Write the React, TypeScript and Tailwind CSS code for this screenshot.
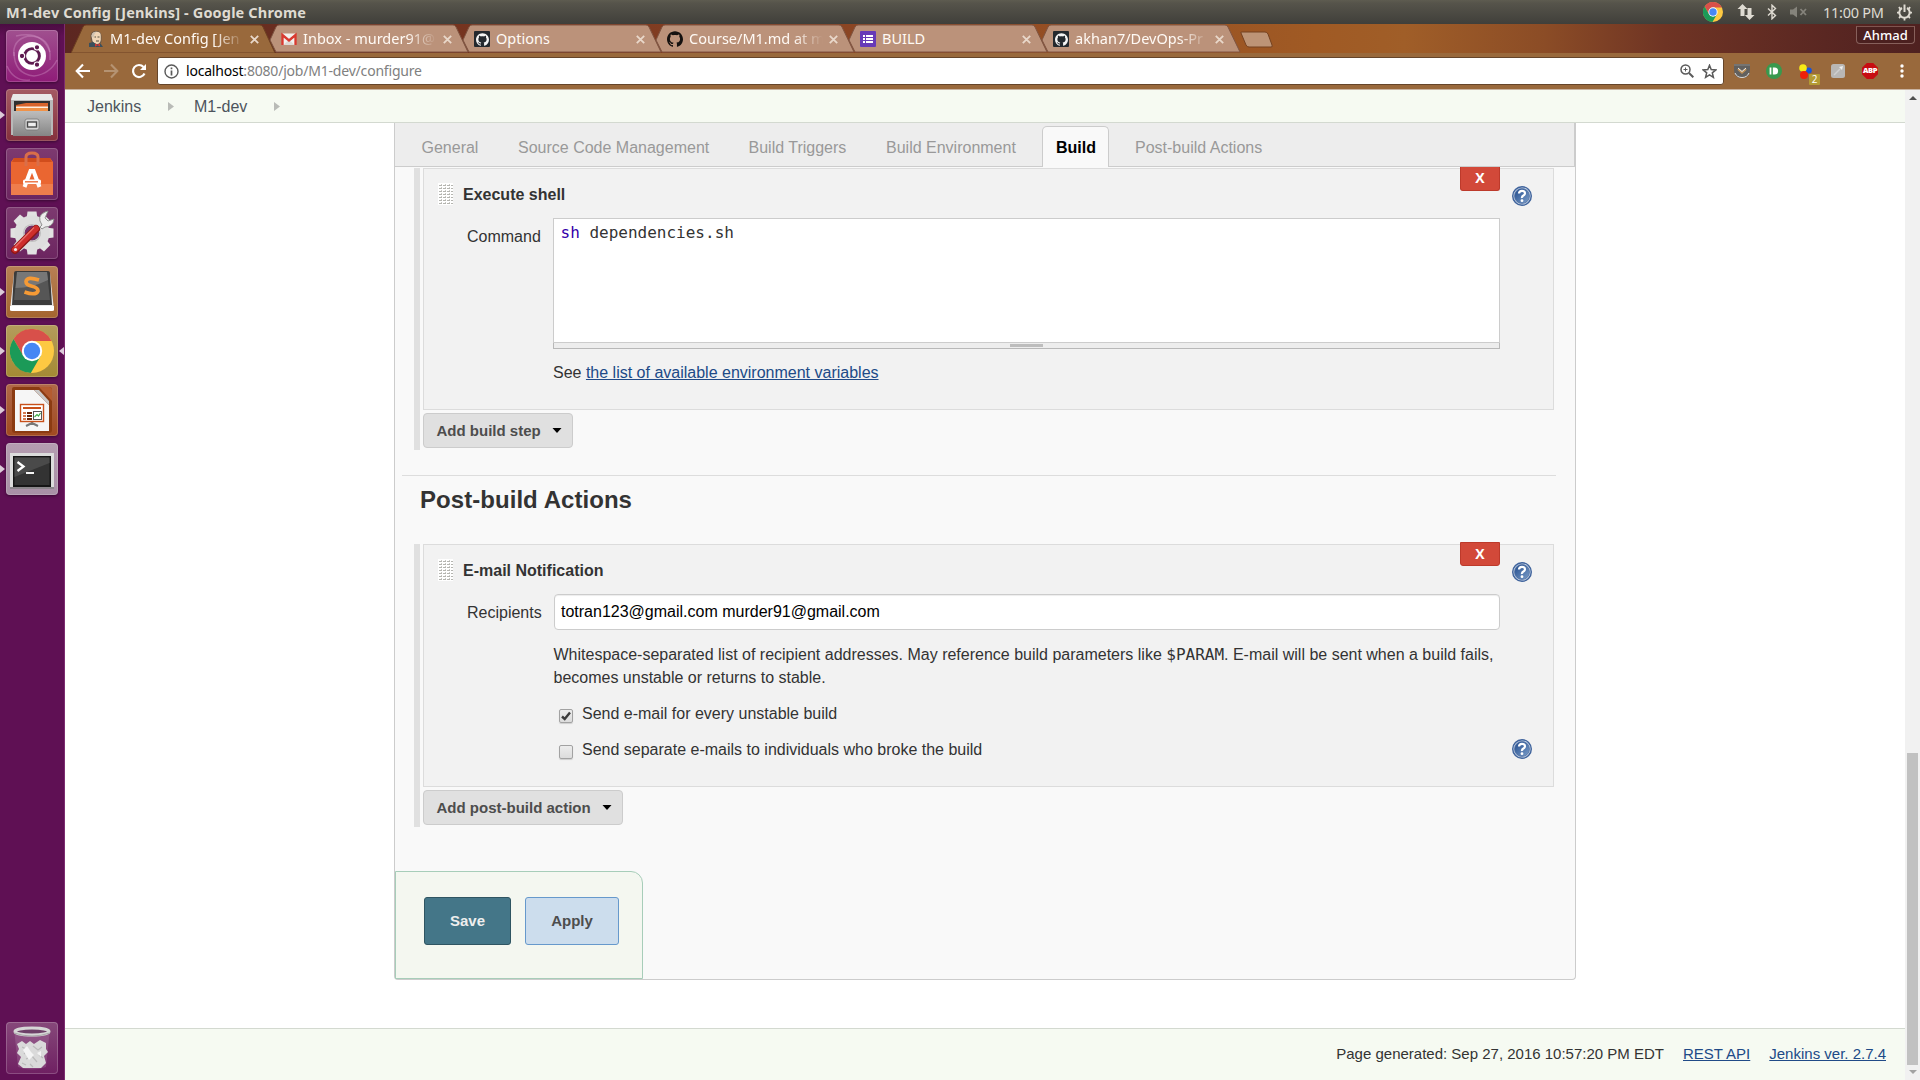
import type { ReactNode } from "react";
import { SiGithub } from "react-icons/si";

const tiles = [
  "bg-[linear-gradient(#a0508f,#8f1c78)]",
  "bg-[linear-gradient(#a45a63,#84303c)]",
  "bg-[linear-gradient(#7d3a70,#6c2560)]",
  "bg-[linear-gradient(#7d3a70,#6c2560)]",
  "bg-[linear-gradient(#b78055,#a4652f)]",
  "bg-[linear-gradient(#b49c5c,#a48a34)]",
  "bg-[linear-gradient(#b06848,#a04a20)]",
  "bg-[linear-gradient(#b59db1,#a890a6)]",
];

function ChromeBall({ size }: { size: number }) {
  return (
    <svg width={size} height={size} viewBox="0 0 44 44" className="block">
      <circle cx="22" cy="22" r="22" fill="#fdc942" />
      <path d="M3.540 10A22 22 0 0 1 41.600 12H22L13.340 27Z" fill="#d8504a" />
      <path d="M3.540 10L13.340 27H30.660L20.860 44A22 22 0 0 1 3.540 10Z" fill="#1b9a58" />
      <circle cx="22" cy="22" r="10.2" fill="#fff" />
      <circle cx="22" cy="22" r="8.200" fill="#4687f4" />
    </svg>
  );
}

function UbuntuIcon() {
  return (
    <svg width="52" height="52" viewBox="0 0 52 52">
      <g fill="none" stroke="#d9a0cf" strokeOpacity=".35" strokeWidth="1.500">
        <path d="M8 26Q6 10 22 6Q46 6 44 30" />
        <path d="M8 22Q8 44 28 46Q44 44 51 30" />
        <path d="M10 6Q36 0 44 22" />
        <path d="M1 36Q8 52 24 50" />
      </g>
      <circle cx="26" cy="26" r="14" fill="#fff" />
      <circle cx="26" cy="26" r="7.4" fill="none" stroke="#5e1a50" strokeWidth="2.9" />
      <g fill="#5e1a50" stroke="#fff" strokeWidth="1.1">
        <circle cx="16" cy="26" r="2.7" />
        <circle cx="31" cy="17.3" r="2.7" />
        <circle cx="31" cy="34.7" r="2.7" />
      </g>
    </svg>
  );
}

function FilesIcon() {
  return (
    <svg width="52" height="52" viewBox="0 0 52 52">
      <defs>
        <linearGradient id="cab" x1="0" y1="0" x2="0" y2="1">
          <stop offset="0" stopColor="#bdbdbd" />
          <stop offset="1" stopColor="#858585" />
        </linearGradient>
      </defs>
      <path d="M7 5H45L47 10V46H5V10Z" fill="#b9b9b9" />
      <path d="M7 5H45L47 11H5Z" fill="#e9e9e9" />
      <path d="M8 12H44V24H8Z" fill="#303030" />
      <path d="M10 16L20 14H42V23H10Z" fill="#d8642c" />
      <path d="M10 17.500H42V19H10Z" fill="#ffeede" />
      <path d="M10 19H42V22H10Z" fill="#f09248" />
      <rect x="7" y="22" width="38" height="25" fill="url(#cab)" />
      <rect x="19" y="30" width="14" height="11" rx="2" fill="#d5d5d5" stroke="#777" strokeWidth=".8" />
      <rect x="21.5" y="33" width="9" height="5" fill="#eee" stroke="#484848" strokeWidth="1.4" />
    </svg>
  );
}

function SoftwareIcon() {
  return (
    <svg width="52" height="52" viewBox="0 0 52 52">
      <path d="M8 10H44L47 14V47H5V14Z" fill="#ea6631" />
      <path d="M8 10H44L46 14H6Z" fill="#d14d1c" />
      <path d="M5 36H47V47H5Z" fill="#ef7d4c" />
      <path d="M20 18V9Q20 5 26 5T32 9V18" fill="none" stroke="#d96e49" strokeWidth="3" />
      <path d="M18.5 39L24.5 23H27.5L33.5 39" fill="none" stroke="#fff" strokeWidth="4" />
      <rect x="17" y="31.5" width="18" height="4.5" rx="1.5" fill="#fff" />
      <path d="M19 33.8H32" stroke="#ea6631" strokeWidth="1.3" />
    </svg>
  );
}

function SettingsIcon() {
  const teeth = [0, 45, 90, 135, 180, 225, 270, 315];
  return (
    <svg width="52" height="52" viewBox="0 0 52 52">
      {teeth.map((a) => (
        <path key={a} d="M21.500 4.500H30.500L31.500 12H20.500Z" fill="#e2e2e2" transform={`rotate(${a} 26 26)`} />
      ))}
      <circle cx="26" cy="26" r="12.500" fill="none" stroke="#dedede" strokeWidth="10" />
      <circle cx="26" cy="26" r="8.500" fill="none" stroke="#bfbfbf" strokeWidth="1.2" />
      <path d="M34 20L36 18Q30 9 39 5L42 4L39 11L42 14L48 12Q47 20 39 20L36 22Z" fill="#ededed" stroke="#888" strokeWidth=".9" />
      <path d="M9 43L30 22" stroke="#8d1818" strokeWidth="8" strokeLinecap="round" />
      <path d="M9 42.5L30 21.5" stroke="#ce2e2c" strokeWidth="6" strokeLinecap="round" />
      <path d="M9 40L28 20.5" stroke="#e8706c" strokeWidth="1.2" />
      <circle cx="9.5" cy="42.5" r="1.6" fill="#eee" />
    </svg>
  );
}

function SublimeIcon() {
  return (
    <svg width="52" height="52" viewBox="0 0 52 52">
      <path d="M8 7H44L48 44H4Z" fill="#e9e9e9" />
      <path d="M4 40H48V44Q48 45 46 45H6Q4 45 4 44Z" fill="#fff" />
      <path d="M10 5H42Q44 5 44 7L46 39H6L8 7Q8 5 10 5Z" fill="#3b3b3b" />
      <path d="M11 6H41L44 34H8Z" fill="#565656" />
      <path d="M11 6H41L42 14Q26 22 9.5 22Z" fill="#777" />
      <path d="M33 14Q21 10 20 15.5Q20 19 26 20.2T32 25Q30 30 18.5 26" fill="none" stroke="#f59a35" strokeWidth="3.7" />
    </svg>
  );
}

function ImpressIcon() {
  return (
    <svg width="52" height="52" viewBox="0 0 52 52">
      <path d="M8 3H43Q46 3 46 6V46Q46 49 43 49H9Q6 49 6 46V5Q6 3 8 3Z" fill="#8b3b12" />
      <path d="M33 3H43Q46 3 46 6V17Z" fill="#b45b30" />
      <path d="M9 6H28L43 21V47H9Z" fill="#f6f6f6" />
      <path d="M28 6L43 21V17L33 6Z" fill="#c9c9c9" />
      <path d="M26 37V41M26 39L20 42M26 39L32 42" stroke="#777" strokeWidth="2" />
      <rect x="14.5" y="20.5" width="23" height="17" fill="#fff" stroke="#c8501a" strokeWidth="1.4" />
      <path d="M17 24H35" stroke="#c8501a" strokeWidth="2" />
      <path d="M17 29H20M17 32H20M17 35H20" stroke="#c8501a" strokeWidth="1.6" />
      <path d="M21 29H26M21 32H26M21 35H26" stroke="#6b2608" strokeWidth="1.8" />
      <rect x="27.5" y="27.5" width="8" height="8" fill="#fff" stroke="#555" />
      <path d="M28.5 33L31 30.5L32.5 32L34.5 29" stroke="#3fae49" strokeWidth="1.2" fill="none" />
    </svg>
  );
}

function TerminalIcon() {
  return (
    <svg width="52" height="52" viewBox="0 0 52 52">
      <path d="M4 11H48V46H4Z" fill="#8b868b" />
      <path d="M4 10H48V44H4Z" fill="#dcdcdc" />
      <rect x="7" y="13" width="38" height="31" fill="#161616" />
      <rect x="8.500" y="14.500" width="35" height="27.500" fill="#333" />
      <path d="M8.500 14.500H43.500V20L8.500 34Z" fill="#4a4a4a" />
      <path d="M11.500 19L17.500 23.500L11.500 28" fill="none" stroke="#fff" strokeWidth="2.3" />
      <path d="M20 30H28" stroke="#fff" strokeWidth="1.9" />
    </svg>
  );
}

function TrashIcon() {
  return (
    <svg width="52" height="52" viewBox="0 0 52 52">
      <path d="M8.500 11H43.500L40 45Q26 50 12 45Z" fill="#c9a5c4" fillOpacity=".22" />
      <path d="M11 22L16 19L20 22L24 19L28 22L34 18L40 21V27L42 30L38 34L40 41L35 46H17L12 42L15 35L11 31L13 27Z" fill="#dadada" />
      <path d="M16 25L22 28L18 32M27 24L32 28L36 25M20 37L26 34L31 40M33 33L37 36M16 41L20 43M24 42L27 45" stroke="#bbb" strokeWidth="1.200" fill="none" />
      <path d="M17 28L21 24L25 30L28 33L23 38ZM31 31L35 29V35Z" fill="#f4f4f4" />
      <ellipse cx="26" cy="9.500" rx="17" ry="3.500" fill="#6e4068" stroke="#d6d6d6" strokeWidth="3" />
      <path d="M8 11Q26 17 44 11" fill="none" stroke="#a9a9a9" strokeWidth="1" />
    </svg>
  );
}

const launcherIcons: ReactNode[] = [
  <UbuntuIcon />,
  <FilesIcon />,
  <SoftwareIcon />,
  <SettingsIcon />,
  <SublimeIcon />,
  <ChromeBall size={44} />,
  <ImpressIcon />,
  <TerminalIcon />,
];
const running = [false, true, false, false, true, true, true, true];

function Launcher() {
  return (
    <aside className="flex w-[65px] shrink-0 flex-col border-r border-[#7d2c70] bg-[linear-gradient(#4b0c42,#5f1054_12px,#5f1054)] pt-1.5">
      <div className="flex flex-col gap-[7px]">
        {launcherIcons.map((icon, i) => (
          <div key={i} className="flex h-[52px] items-center">
            <div className="w-1.5">
              {running[i] && (
                <svg width="5" height="8" viewBox="0 0 5 8">
                  <path d="M0 0L5 4L0 8Z" fill="#dccbd9" />
                </svg>
              )}
            </div>
            <div
              className={`flex size-[52px] items-center justify-center rounded-[4px] shadow-[inset_0_0_0_1px_rgba(255,255,255,0.18),0_1px_3px_rgba(0,0,0,0.4)] ${tiles[i]}`}
            >
              {icon}
            </div>
            {i === 5 && (
              <svg width="5" height="8" viewBox="0 0 5 8" className="ml-px">
                <path d="M5 0L0 4L5 8Z" fill="#dccbd9" />
              </svg>
            )}
          </div>
        ))}
      </div>
      <div className="mt-auto mb-1.5 ml-1.5 size-[52px] rounded-[4px] bg-[linear-gradient(#86487a,#6f2062)] shadow-[inset_0_0_0_1px_rgba(255,255,255,0.2)]">
        <TrashIcon />
      </div>
    </aside>
  );
}

function SystemBar() {
  return (
    <header className="flex h-6 items-center bg-[linear-gradient(#5e5c50,#56544b_3px,#403f3a)] pl-1.5 font-['Noto_Sans',sans-serif] text-[#dfdbd2]">
      <span className="text-[14.5px] leading-6 font-bold tracking-[0.15px] whitespace-nowrap">M1-dev Config [Jenkins] - Google Chrome</span>
      <div className="ml-auto flex h-6 items-center">
        <ChromeBall size={20} />
        <svg width="18" height="18" viewBox="0 0 18 18" className="ml-[14px]" fill="#dfdbd2">
          <path d="M5.500 1L10.500 6H7.500V13H3.500V6H.5Z" />
          <path d="M12.500 17L7.800 12H10.500V5H14.500V12H17.500Z" />
        </svg>
        <svg width="10" height="16" viewBox="0 0 10 16" className="ml-[12px]" fill="none" stroke="#dfdbd2" strokeWidth="1.400">
          <path d="M1 4.500L8.500 11.500L5 14.800V1.200L8.500 4.500L1 11.500" />
        </svg>
        <svg width="18" height="12" viewBox="0 0 18 12" className="ml-[13px]" fill="#85837b">
          <path d="M0 3.500H3L7 .5V11.500L3 8.500H0Z" />
          <path d="M10.500 3L16 9M16 3L10.500 9" stroke="#85837b" strokeWidth="1.800" />
        </svg>
        <span className="ml-[15px] w-[61px] text-[14.5px] leading-6 tracking-[-0.25px] whitespace-nowrap">11:00 PM</span>
        <svg width="17" height="17" viewBox="0 0 17 17" className="mr-[7px] ml-3" fill="none" stroke="#dfdbd2">
          <path d="M6 4A5.200 5.200 0 1 0 11 4" strokeWidth="2" />
          <path d="M8.500 .5V8" strokeWidth="2" />
          <path d="M1 8.700H3.500M13.500 8.700H16M3 14L4.800 12.200M14 14L12.200 12.200M8.500 14V16.500M2.800 3.200L4.500 4.900M14.200 3.200L12.500 4.900" strokeWidth="1.800" />
        </svg>
      </div>
    </header>
  );
}

function JenkinsFavicon() {
  return (
    <svg width="16" height="16" viewBox="0 0 16 16">
      <path d="M2.500 5Q3 0 8 0T13.500 5V11L11 14H5L3 10Z" fill="#6b5a4b" />
      <path d="M3.500 5Q4 .8 8.500 .8T12.800 5V9Q12 13 9 13T4.500 10Z" fill="#f0d6b7" />
      <path d="M3.500 5Q4.500 .6 8.500 .8Q6 2.500 5.500 7Z" fill="#cfc3b2" />
      <path d="M6.500 6H8M9.500 6H11.500M8 10H11" stroke="#443" strokeWidth=".9" />
      <path d="M1 12L5 11L9 13.500L12.500 12.500L15 16H1Z" fill="#3a4f5c" />
      <path d="M7 12.500L9.500 13.800L12 12.500V15.500L9.500 14.200L7 15.800Z" fill="#d33833" />
    </svg>
  );
}
function GmailFavicon() {
  return (
    <svg width="16" height="16" viewBox="0 0 16 16">
      <rect x="1" y="2.500" width="14" height="11.500" rx="1" fill="#f3f1ee" />
      <path d="M2.500 14L8 8.500L13.500 14Z" fill="#ded9d4" />
      <path d="M1.500 14V4L8 9.500L14.500 4V14" fill="none" stroke="#d93a30" strokeWidth="2.300" />
    </svg>
  );
}
function GithubDark() {
  return (
    <div className="flex size-4 items-center justify-center rounded-[1px] bg-[#24292e]">
      <SiGithub size={13} color="#f4f4f4" />
    </div>
  );
}
function FormsFavicon() {
  return (
    <svg width="16" height="16" viewBox="0 0 16 16">
      <rect width="16" height="16" rx="1" fill="#673ab7" />
      <path d="M3 5H5M3 8H5M3 11H5M6 5H13M6 8H13M6 11H13" stroke="#fff" strokeWidth="2" />
    </svg>
  );
}

const browserTabs: { title: string; icon: ReactNode; fade?: boolean }[] = [
  { title: "M1-dev Config [Jen", icon: <JenkinsFavicon />, fade: true },
  { title: "Inbox - murder91@", icon: <GmailFavicon />, fade: true },
  { title: "Options", icon: <GithubDark /> },
  { title: "Course/M1.md at m", icon: <SiGithub size={16} color="#15110f" />, fade: true },
  { title: "BUILD", icon: <FormsFavicon /> },
  { title: "akhan7/DevOps-Pr", icon: <GithubDark />, fade: true },
];

function TabStrip() {
  return (
    <div className="flex h-[29px] bg-[linear-gradient(90deg,#5c2721_0,#74331f_380px,#8a4423_760px,#a05a24_1250px,#a05e28_1340px,#8b4c26_1480px,#6f3424_1600px,#5a2722_1760px,#4f2120_1855px)] pl-[6px]">
      {browserTabs.map((tab, i) => (
        <div key={tab.title} className={`relative h-[29px] w-[193px] shrink-0 ${i === 0 ? "z-10" : ""}`}>
          <svg width="208" height="29" viewBox="0 0 208 29" className="absolute top-0 left-0">
            {i === 0 ? (
              <path d="M0 29L12 3Q13 1 15 1H189Q191 1 192 3L204 29Z" fill="#99693c" stroke="#6d4022" strokeWidth="1" />
            ) : (
              <path d="M6 16L12 3Q13 1 15 1H189Q191 1 192 3L204 28H12Z" fill="#bb927a" stroke="#7f5542" strokeWidth="1" />
            )}
          </svg>
          <div className="relative flex h-full items-center pt-px pl-[17px]">
            <div className="flex size-4 items-center justify-center">{tab.icon}</div>
            <div
              className={`ml-1.5 w-[134px] pb-[2px] font-['Noto_Sans',sans-serif] text-[14.5px] leading-[26px] whitespace-nowrap text-[#fffaf5] ${
                tab.fade ? "[mask-image:linear-gradient(90deg,#000_104px,transparent_134px)]" : ""
              }`}
            >
              {tab.title}
            </div>
            <svg width="9" height="9" viewBox="0 0 9 9" className="ml-[6px]" stroke="#e9d8ca" strokeWidth="1.800">
              <path d="M.8 .8L8.200 8.200M8.200 .8L.8 8.200" />
            </svg>
          </div>
        </div>
      ))}
      <svg width="34" height="17" viewBox="0 0 34 17" className="mt-[7px] ml-[11px]">
        <path d="M1 2Q0 1 2 1H25Q27 1 28 3L32 14Q33 16 31 16H9Q7 16 6 14Z" fill="#bd9476" stroke="#754221" />
      </svg>
      <div className="mt-[2px] mr-[5px] ml-auto h-[18px] w-[59px] rounded-b-[4px] border border-t-[#7f5550] border-[#87605b] bg-[#4b201f] text-center font-['Noto_Sans',sans-serif] text-[13px] leading-[17px] font-medium text-white">
        Ahmad
      </div>
    </div>
  );
}

function Toolbar() {
  return (
    <div className="flex h-[37px] items-center border-b border-[#c9b4a2] bg-[#99693c]">
      <svg width="16" height="16" viewBox="0 0 16 16" className="ml-[10px]" fill="none" stroke="#fff" strokeWidth="2.100">
        <path d="M15 8H2M8 1.500L1.700 8L8 14.500" />
      </svg>
      <svg width="16" height="16" viewBox="0 0 16 16" className="ml-[12px]" fill="none" stroke="#b59372" strokeWidth="2.100">
        <path d="M1 8H14M8 1.500L14.300 8L8 14.500" />
      </svg>
      <svg width="16" height="16" viewBox="0 0 16 16" className="ml-[12px]" fill="none" stroke="#fff" strokeWidth="2.200">
        <path d="M13.500 10.500A6 6 0 1 1 12.500 4" />
        <path d="M15 1V7H9Z" fill="#fff" stroke="none" />
      </svg>
      <div className="ml-[10px] flex h-7 w-[1567px] items-center rounded-[3px] border border-[#65452a] bg-white font-['Noto_Sans',sans-serif] text-[14px]">
        <svg width="15" height="15" viewBox="0 0 15 15" className="ml-[6px]" fill="none" stroke="#5a5a5a" strokeWidth="1.400">
          <circle cx="7.500" cy="7.500" r="6.500" />
          <path d="M7.500 6.500V11.500M7.500 3.500V5.200" strokeWidth="1.700" />
        </svg>
        <div className="ml-[7px] leading-[26px] tracking-[-0.2px] whitespace-nowrap text-[#808080]">
          <span className="text-black">localhost</span>:8080/job/M1-dev/configure
        </div>
        <svg width="14" height="14" viewBox="0 0 14 14" className="mr-[8px] ml-auto" fill="none" stroke="#5a5a5a" strokeWidth="1.500">
          <circle cx="5.500" cy="5.500" r="4.500" />
          <path d="M9 9L13.300 13.300" strokeWidth="2" />
          <path d="M3.500 5.500H7.500M5.500 3.500V7.500" strokeWidth="1" />
        </svg>
        <svg width="15" height="15" viewBox="0 0 15 15" className="mr-[6px]" fill="none" stroke="#5a5a5a" strokeWidth="1.500">
          <path d="M7.500 1.300L9.200 5.600L13.800 5.900L10.300 8.800L11.400 13.300L7.500 10.800L3.600 13.300L4.700 8.800L1.200 5.900L5.800 5.600Z" />
        </svg>
      </div>
      <svg width="16" height="16" viewBox="0 0 16 16" className="ml-[10px]">
        <path d="M0 1H16V7Q16 15 8 15T0 7Z" fill="#62605e" />
        <path d="M0 2H16" stroke="#8a8886" />
        <path d="M1 10Q3 14.500 8 14.500T15 10" stroke="#ddd" fill="none" />
        <path d="M4 6L8 9.500L12 6" stroke="#c09055" strokeWidth="2.300" fill="none" />
        <path d="M4 5L8 8.500L12 5" stroke="#eee" strokeWidth="1" fill="none" />
      </svg>
      <svg width="16" height="16" viewBox="0 0 16 16" className="ml-[16px]">
        <circle cx="8" cy="8" r="8" fill="#38994e" />
        <path d="M4.500 4.500V11.500" stroke="#fff" strokeWidth="1.800" />
        <path d="M6.800 4.500H8.600A3.500 3.500 0 0 1 8.600 11.500H6.800Z" fill="#fff" />
      </svg>
      <div className="relative ml-[17px] size-4">
        <svg width="16" height="16" viewBox="0 0 16 16">
          <circle cx="9.800" cy="7.500" r="3" fill="#1554dc" />
          <circle cx="4" cy="5" r="3.800" fill="#f6ea16" />
          <circle cx="5" cy="12" r="4" fill="#ef2009" />
        </svg>
        <div className="absolute top-[11px] left-[10px] h-[11px] w-[11px] rounded-[1px] bg-[#b49a33] text-center font-['Open_Sans',sans-serif] text-[10px] leading-[11px] text-white">2</div>
      </div>
      <svg width="14" height="14" viewBox="0 0 14 14" className="ml-[16px]">
        <rect width="14" height="14" rx="2.500" fill="#b9b7b5" />
        <path d="M3 11L9 5" stroke="#cfcfcf" strokeWidth="1.500" />
        <path d="M8 3L12 2L11 6Z" fill="#efefef" />
      </svg>
      <div className="ml-[17px] flex size-4 items-center justify-center bg-[#c70d12] font-['Open_Sans',sans-serif] text-[7.5px] leading-none font-extrabold tracking-[-0.4px] text-white [clip-path:polygon(30%_0,70%_0,100%_30%,100%_70%,70%_100%,30%_100%,0_70%,0_30%)]">
        ABP
      </div>
      <svg width="4" height="14" viewBox="0 0 4 14" className="ml-[22px]" fill="#fff">
        <circle cx="2" cy="2" r="1.700" />
        <circle cx="2" cy="7" r="1.700" />
        <circle cx="2" cy="12" r="1.700" />
      </svg>
    </div>
  );
}

function Crumb() {
  return (
    <svg width="6" height="9" viewBox="0 0 6 9">
      <path d="M0 0L6 4.500L0 9Z" fill="#b9bbb7" />
    </svg>
  );
}

function Help() {
  return (
    <svg width="20" height="20" viewBox="0 0 20 20" className="block">
      <defs>
        <linearGradient id="help" x1="0" y1="0" x2="1" y2="1">
          <stop offset="0" stopColor="#204a8c" />
          <stop offset="1" stopColor="#7d9fca" />
        </linearGradient>
      </defs>
      <circle cx="10" cy="10" r="9.300" fill="#c3d2e6" stroke="#3f639c" strokeWidth="1.400" />
      <circle cx="10" cy="10" r="7.500" fill="url(#help)" stroke="#53709f" strokeWidth=".7" />
      <path d="M7 7.500Q7 4.800 10 4.800T13 7.300Q13 8.800 11.400 9.600T10 12" fill="none" stroke="#fff" strokeWidth="2.200" />
      <circle cx="10" cy="14.700" r="1.400" fill="#fff" />
    </svg>
  );
}

function Grip() {
  return (
    <svg width="15" height="22" viewBox="0 0 15 22" className="block">
      <defs>
        <pattern id="grip" x="1" y="1" width="4" height="3" patternUnits="userSpaceOnUse">
          <rect width="4" height="3" fill="#fff" />
          <rect y="1" width="3" height="1" fill="#b5b5b0" />
          <rect x="2" width="1" height="1" fill="#c9c9c5" />
        </pattern>
      </defs>
      <rect width="15" height="22" fill="url(#grip)" />
    </svg>
  );
}

function AddButton({ label, width }: { label: string; width: string }) {
  return (
    <div className={`mt-[3px] flex h-[35px] items-center rounded-[4px] border border-[#ccc] bg-[#e0e0e0] pl-[12.5px] text-[15px] font-bold text-[#4d4d4d] ${width}`}>
      <span className="pt-[2px]">{label}</span>
      <svg width="10" height="5" viewBox="0 0 10 5" className="mr-[10.5px] ml-auto">
        <path d="M.5 0H9.500L5 5Z" fill="#000" />
      </svg>
    </div>
  );
}

function DeleteButton({ top }: { top: string }) {
  return (
    <div className={`absolute right-[53px] h-[24px] w-10 rounded-b-[3px] border border-[#bd3a2b] bg-[#d24939] text-center font-['Open_Sans',sans-serif] text-[14px] leading-[22px] font-bold text-white ${top}`}>
      X
    </div>
  );
}

function Check({ checked }: { checked?: boolean }) {
  return (
    <div className="flex size-[14px] items-center justify-center rounded-[2px] border border-[#a2a2a2] bg-[linear-gradient(#ededed,#dcdcdc)] shadow-[0_1px_1px_rgba(0,0,0,0.15)]">
      {checked && (
        <svg width="10" height="10" viewBox="0 0 10 10" fill="none" stroke="#3c3c3c" strokeWidth="2.400">
          <path d="M1 5.500L3.700 8L9 1.500" />
        </svg>
      )}
    </div>
  );
}

function ConfigTabs() {
  const muted = "pt-[14px] leading-[22px] whitespace-nowrap";
  return (
    <nav className="flex h-11 border-r border-b border-[#ccc] bg-[#ededed] pl-[26.5px] text-[#999]">
      <span className={`w-[96.5px] ${muted}`}>General</span>
      <span className={`w-[230.5px] ${muted}`}>Source Code Management</span>
      <span className={`w-[137.5px] ${muted}`}>Build Triggers</span>
      <span className={`w-[156px] ${muted}`}>Build Environment</span>
      <span className="mt-[3px] h-[41px] w-[67px] rounded-t-[5px] border border-b-0 border-[#ccc] bg-[#f9f9f9] pt-[10px] pl-[13px] leading-[22px] font-bold text-black">Build</span>
      <span className={`ml-[26px] ${muted}`}>Post-build Actions</span>
    </nav>
  );
}

function ShellStep() {
  return (
    <section className="ml-[19px] flex h-[282px] border-l-[6px] border-[#e0e0e0] pl-[3px]">
      <div>
        <div className="relative h-[242px] w-[1131px] border border-[#dcdcdc] bg-[#f2f2f2] pl-[14px]">
          <DeleteButton top="-top-[2px] border-t-0" />
          <div className="absolute top-[17px] right-[21px]">
            <Help />
          </div>
          <div className="flex h-[36px] items-start pt-[14px]">
            <Grip />
            <span className="ml-[10px] pt-px leading-[22px] font-bold">Execute shell</span>
          </div>
          <div className="mt-[13px] flex">
            <div className="w-[115px] pt-[8px] pl-[29px] leading-[22px]">Command</div>
            <div>
              <div className="h-[125px] w-[947px] border border-[#ccc] bg-white pt-[3px] pl-[6.5px] font-['DejaVu_Sans_Mono',monospace] leading-[22px]">
                <span className="text-[#30a]">sh</span> dependencies.sh
              </div>
              <div className="flex h-[6px] justify-center border border-t-0 border-[#b8b8b8] bg-[#ededed] pt-px">
                <div className="h-[3px] w-[33px] bg-[#bdbdbd]" />
              </div>
              <div className="pt-[13px] leading-[22px]">
                See <span className="text-[#204a87] underline">the list of available environment variables</span>
              </div>
            </div>
          </div>
        </div>
        <AddButton label="Add build step" width="w-[150px]" />
      </div>
    </section>
  );
}

function MailStep() {
  return (
    <section className="ml-[19px] flex h-[283px] border-l-[6px] border-[#e0e0e0] pl-[3px]">
      <div>
        <div className="relative h-[243px] w-[1131px] border border-[#dcdcdc] bg-[#f2f2f2] pl-[14px]">
          <DeleteButton top="-top-[3px]" />
          <div className="absolute top-[17px] right-[21px]">
            <Help />
          </div>
          <div className="absolute top-[194px] right-[21px]">
            <Help />
          </div>
          <div className="flex h-[36px] items-start pt-[14px]">
            <Grip />
            <span className="ml-[10px] pt-px leading-[22px] font-bold">E-mail Notification</span>
          </div>
          <div className="mt-[13px] flex">
            <div className="w-[116px] pt-[8px] pl-[29px] leading-[22px]">Recipients</div>
            <div className="w-[946px]">
              <div className="h-[36px] rounded-[4px] border border-[#ccc] bg-white pt-[6px] pl-[6px] leading-[22px] text-black shadow-[inset_0_1px_1px_rgba(0,0,0,0.075)]">
                totran123@gmail.com murder91@gmail.com
              </div>
              <p className="mt-[13px] -ml-[0.5px] leading-[23px] whitespace-nowrap">
                Whitespace-separated list of recipient addresses. May reference build parameters like{" "}
                <span className="font-['DejaVu_Sans_Mono',monospace] text-[16px]">$PARAM</span>. E-mail will be sent when a build fails,
                <br />
                becomes unstable or returns to stable.
              </p>
              <div className="mt-[14px] flex h-[22px] items-center pl-[5px]">
                <div className="pt-[3px]">
                  <Check checked />
                </div>
                <span className="ml-[9px]">Send e-mail for every unstable build</span>
              </div>
              <div className="mt-[14px] flex h-[22px] items-center pl-[5px]">
                <div className="pt-[3px]">
                  <Check />
                </div>
                <span className="ml-[9px]">Send separate e-mails to individuals who broke the build</span>
              </div>
            </div>
          </div>
        </div>
        <AddButton label="Add post-build action" width="w-[200px]" />
      </div>
    </section>
  );
}

function Page() {
  return (
    <div className="flex h-[990px] text-[16px] text-[#333]">
      <div className="flex w-[1840px] flex-col bg-white">
        <div className="flex h-[33px] shrink-0 items-center border-b border-[#d3d9d0] bg-[#f6faf2] pt-px pl-[22px] text-[#4d545d]">
          <span className="w-[81px]">Jenkins</span>
          <Crumb />
          <span className="ml-5 w-[80px]">M1-dev</span>
          <Crumb />
        </div>
        <main className="ml-[329px] flex h-[857px] w-[1182px] flex-col rounded-b-[4px] border border-t-0 border-[#ccc] bg-[#f9f9f9]">
          <ConfigTabs />
          <div className="pt-px">
            <ShellStep />
          </div>
          <div className="mt-[25px] ml-[7px] h-px w-[1154px] bg-[#ddd]" />
          <h2 className="mt-[9px] h-[59px] pl-[25px] text-[24px] leading-[30px] font-bold tracking-[0.05px]">Post-build Actions</h2>
          <MailStep />
          <div className="mt-auto flex h-[108px] w-[248px] gap-[14px] rounded-tr-[12px] border border-[#a7cdb9] bg-[#f4f7f0] pt-[25px] pl-[28px] text-[15px] font-bold">
            <div className="flex h-12 w-[87px] items-center justify-center rounded-[3px] border border-[#2f5562] bg-[#447688] text-[#eee]">Save</div>
            <div className="flex h-12 w-[94px] items-center justify-center rounded-[3px] border border-[#6699cc] bg-[#ccdded] text-[#4d4d4d]">Apply</div>
          </div>
        </main>
        <footer className="mt-auto flex h-[52px] shrink-0 items-center justify-end border-t border-[#d3d9d0] bg-[#f6faf2] pr-[19px] text-[15px]">
          <span>Page generated: Sep 27, 2016 10:57:20 PM EDT</span>
          <span className="ml-[19px] text-[#204a87] underline">REST API</span>
          <span className="ml-[19px] text-[#204a87] underline">Jenkins ver. 2.7.4</span>
        </footer>
      </div>
      <div className="flex w-[15px] flex-col items-center bg-[#f1f1f1]">
        <svg width="8" height="4" viewBox="0 0 8 4" className="mt-[6px]">
          <path d="M0 4L4 0L8 4Z" fill="#505050" />
        </svg>
        <div className="mt-auto h-[312px] w-[11px] bg-[#c1c1c1]" />
        <svg width="8" height="4" viewBox="0 0 8 4" className="mt-[5px] mb-[6px]">
          <path d="M0 0L4 4L8 0Z" fill="#a3a3a3" />
        </svg>
      </div>
    </div>
  );
}

export default function App() {
  return (
    <div className="flex h-[1080px] w-[1920px] flex-col overflow-hidden bg-white font-['Liberation_Sans',Arial,sans-serif]">
      <SystemBar />
      <div className="flex h-[1056px]">
        <Launcher />
        <div className="w-[1855px]">
          <TabStrip />
          <Toolbar />
          <Page />
        </div>
      </div>
    </div>
  );
}
